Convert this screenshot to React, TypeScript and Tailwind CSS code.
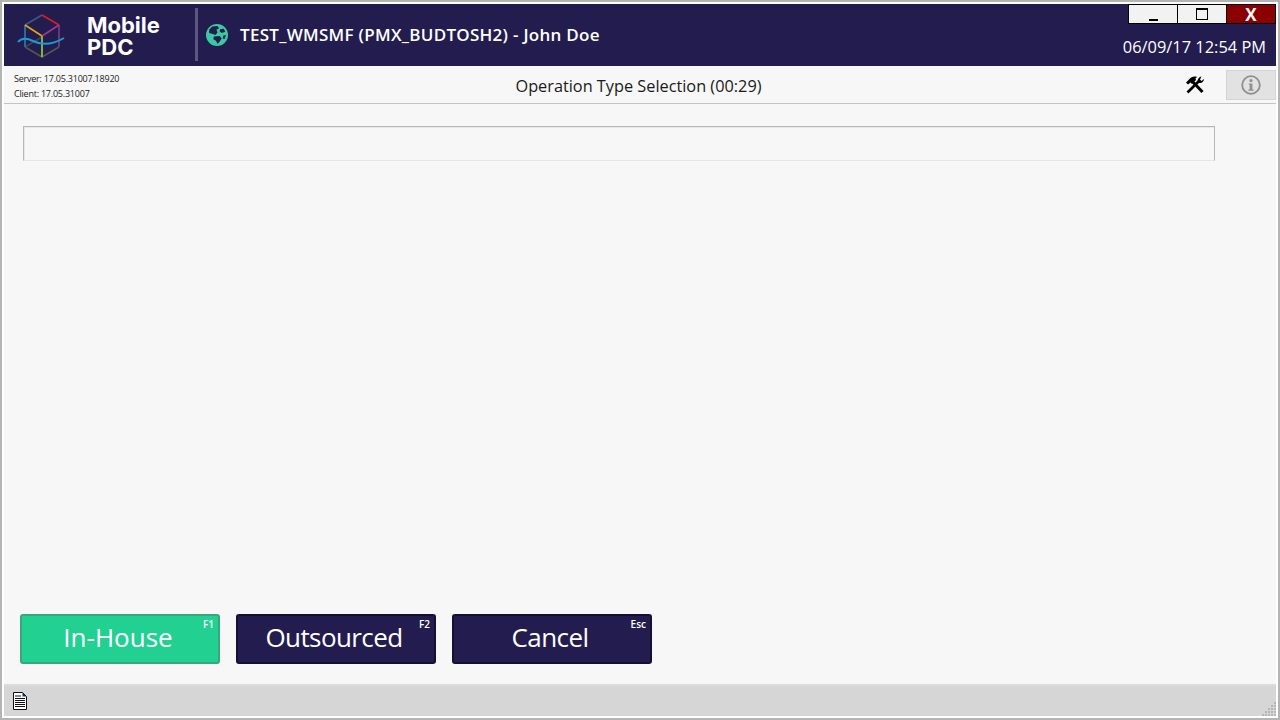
const uiFont = "font-['Open_Sans','Noto_Sans',sans-serif]";

const buttons = [
  { label: 'In-House', hint: 'F1', className: 'bg-[#22d192] border-[#35a883] tracking-normal' },
  { label: 'Outsourced', hint: 'F2', className: 'bg-[#231d4f] border-[#14102f] tracking-[-0.6px]' },
  { label: 'Cancel', hint: 'Esc', className: 'bg-[#231d4f] border-[#14102f] tracking-[-0.6px]' },
];

function Logo() {
  return (
    <svg width="52" height="48" viewBox="0 0 52 48" fill="none" strokeWidth="1.6">
      <path d="M28 25V46L11 36" stroke="#555" />
      <path d="M28 46L45 36" stroke="#555" />
      <path d="M11 36L28 26" stroke="#444" />
      <path d="M11 14V36" stroke="#2a7fa8" />
      <path d="M45 14V36" stroke="#7a3f80" />
      <path d="M11 14L28 4" stroke="#3d5a80" />
      <path d="M28 4L45 14" stroke="#e01b24" />
      <path d="M11 14L28 25" stroke="#e8a317" />
      <path d="M28 25L45 14" stroke="#9c3a96" />
      <path d="M28 25V46" stroke="#8fcf3c" />
      <path d="M4 31C8 26 13 27 19 30C27 34 38 34 50 27" stroke="#1a9ad6" strokeWidth="2" />
    </svg>
  );
}

function Globe() {
  return (
    <svg width="22" height="22" viewBox="0 0 21 21">
      <circle cx="10.5" cy="10.5" r="10.5" fill="#3cc8a0" />
      <path d="M6 2.5L11 2L12.5 4L10 5.5L11 8L9 10.5L6.5 9.5L3 8.5L3 5.5Z" fill="#231d4f" />
      <path d="M13.5 5L17 4.5L18.5 7.5L15 8.5L13 7Z" fill="#231d4f" />
      <path d="M7.5 12L13 11.5L15 13.5L13 17L11 19L9.5 16L7 14.5Z" fill="#231d4f" />
      <path d="M16.5 11L19 10.5L18 14L16 14Z" fill="#231d4f" />
    </svg>
  );
}

// hammer crossed with an open-end wrench
function ToolsIcon() {
  return (
    <svg width="20" height="20" viewBox="0 0 20 20" fill="none" stroke="#000">
      <path d="M6.5 5.5L17.5 17" strokeWidth="3" />
      <path d="M1 7.5L4 4.5C6 2 9 1 12 2L10.5 3.5L11 5L7 9L5.5 7.5L3 9.5Z" fill="#000" stroke="none" />
      <path d="M2.5 17.5L14 6" strokeWidth="2.6" />
      <path d="M13 7.5C12 5 13.5 2 16.5 1.5L15 4.5L16.5 6L19 4C19 7 16 9 13 7.5Z" fill="#000" stroke="none" />
    </svg>
  );
}

function DocIcon() {
  return (
    <svg width="14" height="18" viewBox="0 0 14 18" fill="none">
      <path d="M0.5 0.5H9.5L13.5 4.5V17.5H0.5Z" fill="#fff" stroke="#111" />
      <path d="M9.5 0.5V4.5H13.5Z" fill="#1a2a6c" />
      <path d="M2 4H8M2 6.5H12M2 8.5H12M2 10.5H12M2 12.5H12M2 14.5H12" stroke="#111" />
    </svg>
  );
}

function InfoIcon() {
  return (
    <svg width="20" height="20" viewBox="0 0 20 20" fill="none">
      <circle cx="10" cy="10" r="8.8" stroke="#8f8f8f" strokeWidth="1.8" />
      <circle cx="10" cy="5.6" r="1.6" fill="#8f8f8f" />
      <path d="M7.8 8.4H11.4V14.4H12.6V15.8H7.4V14.4H8.6V9.8H7.8Z" fill="#8f8f8f" />
    </svg>
  );
}

function Grip() {
  return (
    <svg width="14" height="14" viewBox="0 0 14 14" fill="#b6b6b6">
      <path d="M12 0h2v2h-2zM9 3h2v2H9zM12 3h2v2h-2zM6 6h2v2H6zM9 6h2v2H9zM12 6h2v2h-2zM3 9h2v2H3zM6 9h2v2H6zM9 9h2v2H9zM12 9h2v2h-2zM0 12h2v2H0zM3 12h2v2H3zM6 12h2v2H6zM9 12h2v2H9zM12 12h2v2h-2z" />
    </svg>
  );
}

export default function App() {
  return (
    <div className={`h-[720px] w-[1280px] overflow-hidden border-2 border-[#b4b4b4] bg-white p-[2px] ${uiFont}`}>
      <div className="flex h-full flex-col bg-[#f7f7f7]">
        <header className="flex h-[62px] shrink-0 bg-[#231d4f] text-white">
          <div className="flex w-[191px] shrink-0 items-center">
            <div className="ml-[10px] w-[52px]">
              <Logo />
            </div>
            <div className="ml-[21px] mt-[1px] font-['Inter',sans-serif] text-[22px] font-bold">
              <div className="h-[22px] leading-[22px]">Mobile</div>
              <div className="h-[22px] leading-[22px]">PDC</div>
            </div>
          </div>
          <div className="mt-[4px] h-[53px] w-[3px] bg-[#5b5780]" />
          <div className="ml-[8px] flex items-center">
            <Globe />
            <span className="ml-[12px] mt-[-1px] text-[17px] font-semibold tracking-[0.28px]">TEST_WMSMF (PMX_BUDTOSH2) - John Doe</span>
          </div>
          <div className="ml-auto flex flex-col items-end">
            <div className="flex h-[20px] border border-black text-black">
              <div className="flex w-[49px] items-end justify-center border-r border-black bg-[#f2f2f2] pb-[2px]">
                <div className="h-[2px] w-[9px] bg-black" />
              </div>
              <div className="flex w-[49px] items-center justify-center border-r border-black bg-[#f2f2f2]">
                <div className="h-[12px] w-[12px] border border-t-2 border-black" />
              </div>
              <div className="flex w-[48px] items-center justify-center bg-[#8b0000] text-[17px] font-bold leading-none text-white">X</div>
            </div>
            <div className="mr-[10px] mt-[12px] text-[16.4px] leading-[22px]">06/09/17 12:54 PM</div>
          </div>
        </header>

        <div className="flex h-[38px] shrink-0 items-center border-b border-[#c4c4c4]">
          <div className="ml-[10px] mt-[2px] w-[180px] text-[9px] leading-[15px] tracking-[-0.22px] text-[#222]">
            <div>Server: 17.05.31007.18920</div>
            <div>Client: 17.05.31007</div>
          </div>
          <div className="mt-[4px] flex-1 pr-[13px] text-center text-[16.3px] text-[#1a1a1a]">Operation Type Selection (00:29)</div>
          <div className="flex w-[180px] items-center justify-end">
            <div className="mr-[21px]">
              <ToolsIcon />
            </div>
            <div className="flex h-[30px] w-[50px] items-center justify-center border border-[#d4d4d4] bg-[#e2e2e2]">
              <InfoIcon />
            </div>
          </div>
        </div>

        <main className="flex flex-1 flex-col px-[16px] pb-[20px] pt-[22px]">
          <div className="ml-[3px] h-[35px] w-[1192px] border border-x-[#b4b8b8] border-b-[#e4e4ec] border-t-[#b4b8b8] shadow-[inset_1px_1px_0_#e8e8e8]" />
          <div className="mt-auto flex gap-[16px]">
            {buttons.map((button) => (
              <button
                key={button.label}
                className={`relative h-[50px] w-[200px] rounded-[3px] border-2 pb-[4px] pr-[4px] text-[26px] leading-none text-white ${button.className}`}
              >
                {button.label}
                <span className="absolute right-[4px] top-[2px] text-[10px] font-semibold leading-[12px] tracking-normal">{button.hint}</span>
              </button>
            ))}
          </div>
        </main>

        <footer className="flex h-[32px] shrink-0 items-center justify-between border-t-2 border-[#dcdcdc] bg-[#d6d6d6] pl-[9px]">
          <DocIcon />
          <div className="self-end">
            <Grip />
          </div>
        </footer>
      </div>
    </div>
  );
}
